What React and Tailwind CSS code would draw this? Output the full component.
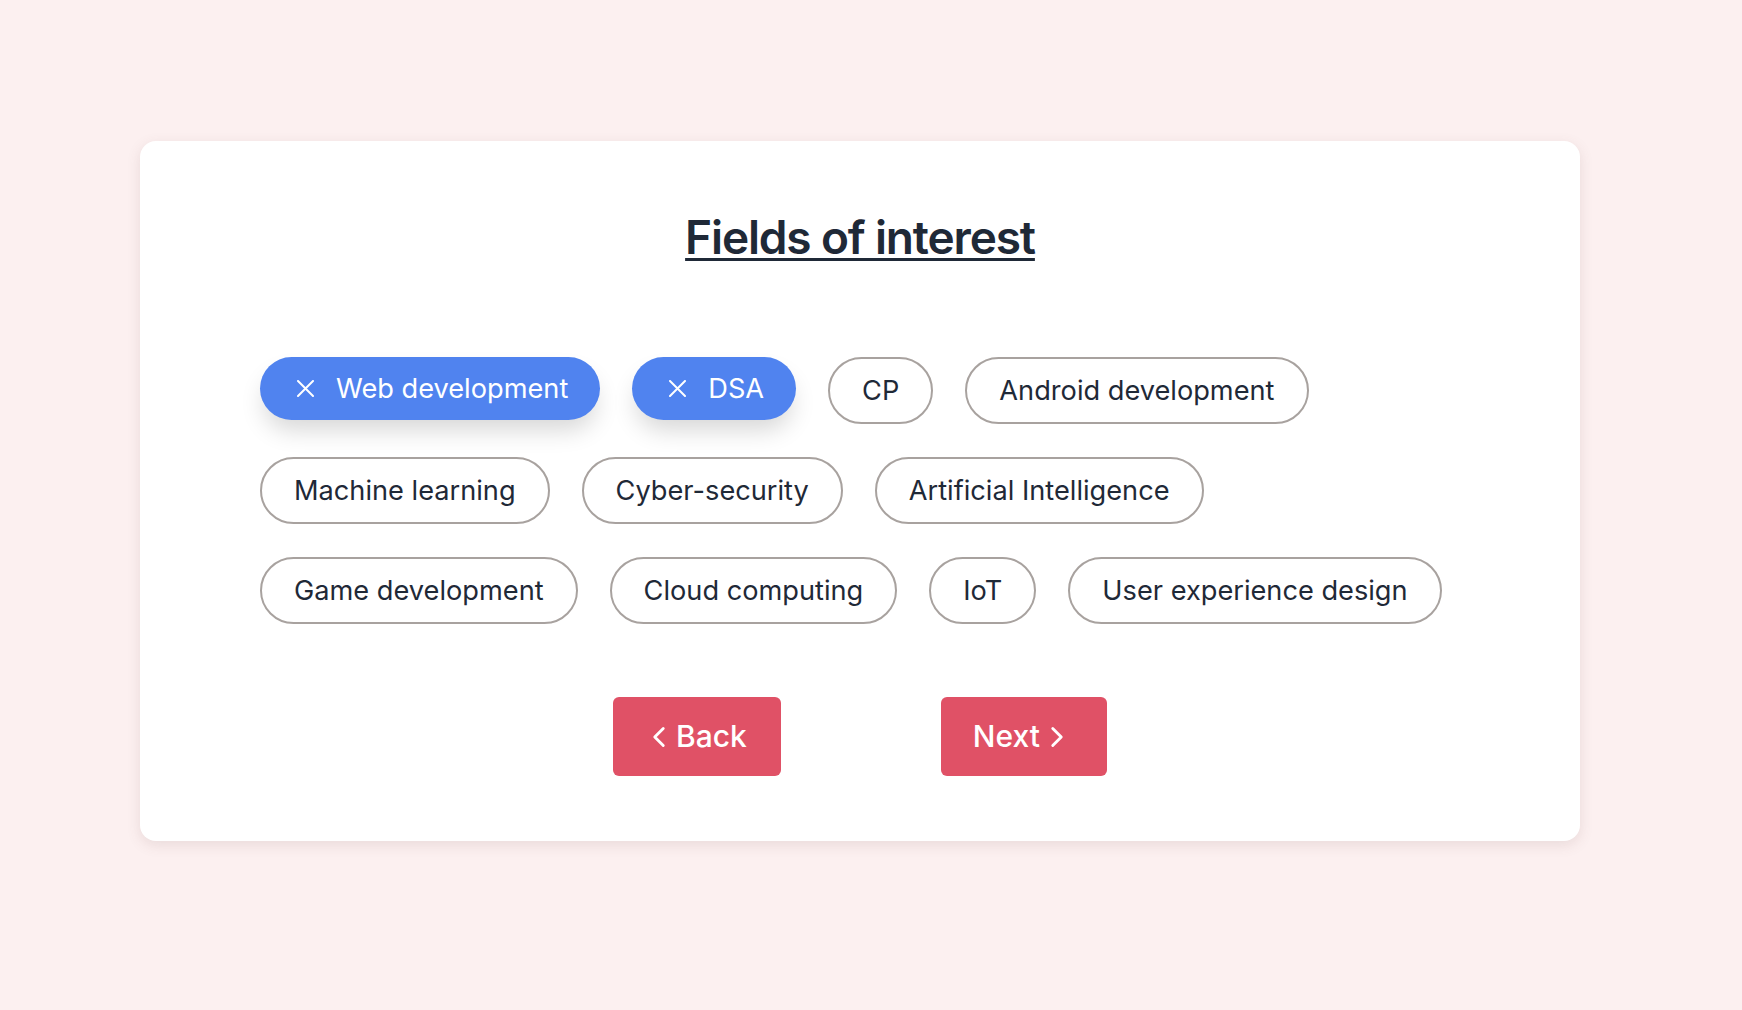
import React, { useState } from "react";
import { ChevronLeft, ChevronRight } from "lucide-react";

const FIELDS = [
  "Web development",
  "DSA",
  "CP",
  "Android development",
  "Machine learning",
  "Cyber-security",
  "Artificial Intelligence",
  "Game development",
  "Cloud computing",
  "IoT",
  "User experience design",
];

// small cross shown on picked chips
const Cross = () => (
  <svg width="17" height="17" viewBox="0 0 17 17" className="shrink-0">
    <path d="M1 1L16 16M16 1L1 16" stroke="white" strokeWidth="2" strokeLinecap="round" />
  </svg>
);

const Chip = ({ label, selected, onClick }) => {
  if (selected) {
    return (
      <button
        onClick={onClick}
        className="flex items-center gap-[22px] rounded-full bg-[#5083ef] pl-[37px] pr-8 py-[11px] text-[27.2px] leading-[41px] text-white shadow-[0_14px_24px_-4px_rgba(0,0,0,0.16)]"
      >
        <Cross />
        {label}
      </button>
    );
  }
  return (
    <button
      onClick={onClick}
      className="rounded-full border-2 border-[#a8a29f] bg-white px-8 py-[11px] text-[27.2px] leading-[41px] text-[#1f2937]"
    >
      {label}
    </button>
  );
};

const App = () => {
  const [picked, setPicked] = useState(["Web development", "DSA"]);

  const toggle = (name) => {
    setPicked((p) => (p.includes(name) ? p.filter((x) => x !== name) : [...p, name]));
  };

  return (
    <div
      className="min-h-screen bg-[#fcf0f0] pt-[141px] pl-[140px] pr-[162px]"
      style={{ fontFamily: "Inter, 'Noto Sans', sans-serif" }}
    >
      <div className="w-[1440px] h-[700px] rounded-2xl bg-white pt-[68px] px-[120px] shadow-[0_4px_14px_rgba(110,70,70,0.13)]">
        <h1 className="text-center text-[46px] leading-[56px] font-semibold tracking-tight text-[#1f2937] underline decoration-[3px] underline-offset-[4px]">
          Fields of interest
        </h1>

        <div className="mt-[92px] flex flex-wrap items-start gap-x-8 gap-y-[33px]">
          {FIELDS.map((f) => (
            <Chip key={f} label={f} selected={picked.includes(f)} onClick={() => toggle(f)} />
          ))}
        </div>

        <div className="mt-[73px] flex justify-center gap-[160px]">
          <button className="flex h-[79px] items-center rounded-md bg-[#e05166] pl-[29px] pr-[34px] text-[30px] font-medium text-white">
            <ChevronLeft size={34} strokeWidth={2} />
            Back
          </button>
          <button className="flex h-[79px] items-center rounded-md bg-[#e05166] pl-8 pr-[33px] text-[30px] font-medium text-white">
            Next
            <ChevronRight size={34} strokeWidth={2} />
          </button>
        </div>
      </div>
    </div>
  );
};

export default App;
